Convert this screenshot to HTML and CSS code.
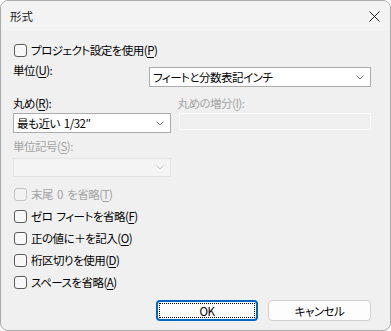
FILE: index.html
```html
<!DOCTYPE html>
<html lang="ja">
  <head>
    <meta charset="UTF-8" />
    <meta name="viewport" content="width=device-width, initial-scale=1.0" />
    <title>形式</title>
    <link rel="stylesheet" href="styles.css">
  </head>
  <body>
    <div class="window">
      <div class="titlebar">
        <span class="title">形式</span>
        <svg class="close" width="11" height="11" viewBox="0 0 11 11">
          <path d="M0.5 0.5 L10.5 10.5 M10.5 0.5 L0.5 10.5" stroke="#1a1a1a" stroke-width="1" fill="none" />
        </svg>
      </div>

      <div class="content">
        <label class="check first"><span class="box"></span>プロジェクト設定を使用(<u>P</u>)</label>

        <div class="unit-row">
          <span class="label unit-label">単位(<u>U</u>):</span>
          <div class="combo wide">
            <span class="value">フィートと分数表記インチ</span>
            <svg class="chevron" width="8" height="5" viewBox="0 0 8 5"><path d="M0.5 0.5 L4 4 L7.5 0.5" stroke="#707070" fill="none" /></svg>
          </div>
        </div>

        <div class="round-row">
          <div class="field round">
            <span class="label">丸め(<u>R</u>):</span>
            <div class="combo">
              <span class="value">最も近い 1/32″</span>
              <svg class="chevron" width="8" height="5" viewBox="0 0 8 5"><path d="M0.5 0.5 L4 4 L7.5 0.5" stroke="#707070" fill="none" /></svg>
            </div>
          </div>
          <div class="field step disabled">
            <span class="label">丸めの増分(<u>I</u>):</span>
            <div class="textbox"></div>
          </div>
        </div>

        <div class="field symbol disabled">
          <span class="label">単位記号(<u>S</u>):</span>
          <div class="combo">
            <span class="value"></span>
            <svg class="chevron" width="8" height="5" viewBox="0 0 8 5"><path d="M0.5 0.5 L4 4 L7.5 0.5" stroke="#c8c8c8" fill="none" /></svg>
          </div>
        </div>

        <div class="checks">
          <label class="check disabled"><span class="box"></span>末尾 0 を省略(<u>T</u>)</label>
          <label class="check"><span class="box"></span>ゼロ フィートを省略(<u>F</u>)</label>
          <label class="check"><span class="box"></span>正の値に＋を記入(<u>O</u>)</label>
          <label class="check"><span class="box"></span>桁区切りを使用(<u>D</u>)</label>
          <label class="check"><span class="box"></span>スペースを省略(<u>A</u>)</label>
        </div>

        <div class="buttons">
          <button class="btn default"><span class="focus">OK</span></button>
          <button class="btn">キャンセル</button>
        </div>
      </div>
    </div>
  </body>
</html>
```

FILE: styles.css
```css
* {
  box-sizing: border-box;
}
body {
  margin: 0;
  background: #ffffff;
  font-family: "Noto Sans CJK JP", "Noto Sans", sans-serif;
  font-size: 11.5px;
  letter-spacing: -0.5px;
  word-spacing: 2px;
  font-feature-settings: "palt";
  color: #000000;
}
.window {
  width: 391px;
  height: 331px;
  border: 1px solid #a9a9a9;
  border-radius: 8px;
  overflow: hidden;
  background: #f0f0f0;
}
.titlebar {
  height: 30px;
  background: #f3f3f3;
  display: flex;
  align-items: center;
  justify-content: space-between;
  padding: 0 10px 0 9px;
}
.title {
  line-height: 14px;
  color: #1a1a1a;
  letter-spacing: 0;
}
.close {
  display: block;
}
.content {
  padding: 13px 19px 0 12px;
  display: flex;
  flex-direction: column;
}
.label {
  line-height: 14px;
  white-space: nowrap;
}
u {
  text-decoration-thickness: 1px;
  text-underline-offset: 2px;
}
.check {
  display: flex;
  align-items: center;
  height: 13px;
  line-height: 13px;
  white-space: pre;
}
.box {
  width: 13px;
  height: 13px;
  margin: 0 4px 0 1px;
  border: 1px solid #5c5c5c;
  border-radius: 3px;
  background: #f7f7f7;
  flex: none;
}
.check.disabled {
  color: #a3a3a3;
}
.check.disabled .box {
  border-color: #c4c4c4;
  background: #f2f2f2;
}
.unit-row {
  display: flex;
  align-items: flex-start;
  margin-top: 6px;
}
.unit-label {
  width: 136px;
  flex: none;
}
.combo {
  height: 20px;
  background: #ffffff;
  border: 1px solid #acacac;
  display: flex;
  align-items: center;
  justify-content: space-between;
  padding: 0 6px 0 3px;
  white-space: pre;
}
.combo.wide {
  width: 229px;
  margin-top: 4px;
}
.chevron {
  display: block;
}
.round-row {
  display: flex;
  gap: 8px;
  margin-top: 9px;
}
.field {
  display: flex;
  flex-direction: column;
  gap: 3px;
}
.field.round {
  width: 158px;
}
.field.step {
  width: 193px;
}
.field.step .label {
  margin-left: -1px;
}
.textbox {
  height: 17px;
  background: #f0f0f0;
  border: 1px solid #fafafa;
}
.field.symbol {
  width: 158px;
  margin-top: 6px;
  gap: 5px;
}
.field.symbol .combo {
  height: 19px;
}
.disabled .label {
  color: #a3a3a3;
}
.disabled .combo {
  background: #f4f4f4;
  border-color: #e3e3e3;
}
.checks {
  display: flex;
  flex-direction: column;
  gap: 9px;
  margin-top: 11px;
}
.buttons {
  display: flex;
  justify-content: flex-end;
  gap: 10px;
  margin-top: 11px;
}
.btn {
  width: 103px;
  height: 21px;
  padding: 0;
  font: inherit;
  letter-spacing: inherit;
  font-feature-settings: "palt";
  color: #000000;
  background: #fdfdfd;
  border: 1px solid #d0d0d0;
  border-radius: 4px;
  display: flex;
  align-items: center;
  justify-content: center;
}
.btn.default {
  width: 102px;
  border: 2px solid #0067c0;
  padding: 1px;
}
.focus {
  flex: 1;
  align-self: stretch;
  border: 1px dotted #000000;
  display: flex;
  align-items: center;
  justify-content: center;
}
```
